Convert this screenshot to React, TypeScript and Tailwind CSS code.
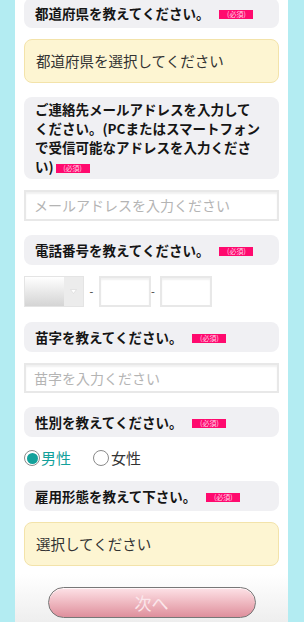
import React from 'react'

const font = { fontFamily: '"Noto Sans CJK JP", "Noto Sans", sans-serif' }

function Badge({ className = '' }: { className?: string }) {
  return (
    <span
      className={`inline-flex h-[9px] w-[34px] items-center justify-center bg-[#ff0a6e] align-middle text-[7px] font-normal leading-none text-[#ffd6e6] ${className}`}
    >
      (必須)
    </span>
  )
}

function Label({ children }: { children: React.ReactNode }) {
  return (
    <div className="flex min-h-[30px] items-center rounded-[8px] bg-[#f0f0f3] py-[3px] pl-[11px] pr-[8px] text-[13.5px] font-bold leading-[19px] text-[#151515]">
      <div>{children}</div>
    </div>
  )
}

function YellowSelect({ text }: { text: string }) {
  return (
    <div className="flex h-[44px] items-center rounded-[8px] border border-[#f3e3aa] bg-[#fdf5d2] pl-[11px] text-[14.5px] text-[#333]">
      {text}
    </div>
  )
}

function TextInput({ placeholder, h = 'h-[31px]' }: { placeholder: string; h?: string }) {
  return (
    <div
      className={`flex ${h} items-center border-2 border-[#e8e8e8] bg-white pl-[8px] text-[14px] text-[#b4b4b4] shadow-[inset_0_2px_2px_rgba(0,0,0,0.06)]`}
    >
      {placeholder}
    </div>
  )
}

export default function App() {
  return (
    <div className="min-h-[622px] w-full overflow-hidden bg-[#b3ecf2]" style={font}>
      <div className="mx-[15px] flex h-[622px] w-[273px] flex-col bg-white px-[9px]">
        <div className="-mt-[2px]">
          <Label>
            都道府県を教えてください。
            <Badge className="ml-[10px]" />
          </Label>
        </div>
        <div className="mt-[11px]">
          <YellowSelect text="都道府県を選択してください" />
        </div>

        <div className="mt-[14px]">
          <Label>
            ご連絡先メールアドレスを入力して
            <br />
            ください。(PCまたはスマートフォン
            <br />
            で受信可能なアドレスを入力くださ
            <br />
            い)
            <Badge className="ml-[2px]" />
          </Label>
        </div>
        <div className="mt-[11px]">
          <TextInput placeholder="メールアドレスを入力ください" />
        </div>

        <div className="mt-[14px]">
          <Label>
            電話番号を教えてください。
            <Badge className="ml-[10px]" />
          </Label>
        </div>
        <div className="mt-[11px] flex h-[31px] items-center">
          <div className="flex h-full w-[60px] border border-[#e4e4e4]">
            <div className="h-full flex-1 bg-gradient-to-b from-white to-[#d4d4d4]" />
            <div className="flex h-full w-[19px] items-center justify-center bg-[#ececec]">
              <svg width="7" height="5" viewBox="0 0 7 5">
                <path d="M0.5 0.5 L3.5 4.5 L6.5 0.5 Z" fill="#fff" stroke="#d6d6d6" strokeWidth="0.6" />
              </svg>
            </div>
          </div>
          <span className="w-[15px] text-center text-[11px] text-[#333]">-</span>
          <div className="h-full w-[52px] border-2 border-[#e8e8e8] bg-white shadow-[inset_0_2px_2px_rgba(0,0,0,0.06)]" />
          <span className="w-[9px] text-[11px] text-[#333]">-</span>
          <div className="h-full w-[52px] border-2 border-[#e8e8e8] bg-white shadow-[inset_0_2px_2px_rgba(0,0,0,0.06)]" />
        </div>

        <div className="mt-[15px]">
          <Label>
            苗字を教えてください。
            <Badge className="ml-[10px]" />
          </Label>
        </div>
        <div className="mt-[11px]">
          <TextInput placeholder="苗字を入力ください" h="h-[30px]" />
        </div>

        <div className="mt-[14px]">
          <Label>
            性別を教えてください。
            <Badge className="ml-[10px]" />
          </Label>
        </div>
        <div className="mt-[11px] flex h-[20px] items-center text-[15px]">
          <span className="flex h-[16px] w-[16px] items-center justify-center rounded-full border border-[#8a8a8a] bg-white">
            <span className="h-[11px] w-[11px] rounded-full bg-[#13a19b]" />
          </span>
          <span className="ml-[1px] text-[#13a19b]">男性</span>
          <span className="ml-[22px] h-[16px] w-[16px] rounded-full border border-[#8a8a8a] bg-white" />
          <span className="ml-[2px] text-[#333]">女性</span>
        </div>

        <div className="mt-[13px]">
          <Label>
            雇用形態を教えて下さい。
            <Badge className="ml-[10px]" />
          </Label>
        </div>
        <div className="mt-[11px]">
          <YellowSelect text="選択してください" />
        </div>

        <div className="-mx-[9px] mt-[8px] flex flex-1 justify-center bg-gradient-to-b from-white to-[#eeeeee] pt-[13px]">
          <button
            type="button"
            className="flex h-[31px] w-[208px] items-center justify-center rounded-full border border-[#777] bg-gradient-to-b from-[#fde2e7] to-[#de8f9c] text-[17px] text-[#fbe6eb] shadow-[inset_0_1px_0_rgba(255,255,255,0.7)]"
          >
            次へ
          </button>
        </div>
      </div>
    </div>
  )
}
